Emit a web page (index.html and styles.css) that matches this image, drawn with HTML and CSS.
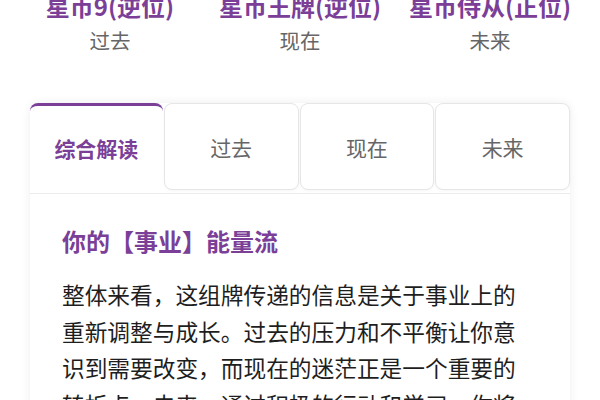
FILE: index.html
```html
<!DOCTYPE html>
<html lang="zh">
<head>
<meta charset="utf-8">
<link rel="stylesheet" href="styles.css">
</head>
<body>
<div class="cards">
  <div class="card-col"><div class="card-name">星币9(逆位)</div><div class="card-pos">过去</div></div>
  <div class="card-col"><div class="card-name">星币王牌(逆位)</div><div class="card-pos">现在</div></div>
  <div class="card-col"><div class="card-name">星币侍从(正位)</div><div class="card-pos">未来</div></div>
</div>
<div class="panel">
  <div class="tabs">
    <div class="tab active">综合解读</div>
    <div class="tab">过去</div>
    <div class="tab">现在</div>
    <div class="tab">未来</div>
  </div>
  <div class="content">
    <h2 class="heading">你的【事业】能量流</h2>
    <p class="text">整体来看，这组牌传递的信息是关于事业上的重新调整与成长。过去的压力和不平衡让你意识到需要改变，而现在的迷茫正是一个重要的转折点。未来，通过积极的行动和学习，你将迎来新的机会。</p>
  </div>
</div>
</body>
</html>
```
FILE: styles.css
```css
html, body {
  margin: 0;
  padding: 0;
  background: #ffffff;
  font-family: "Noto Sans CJK SC", "Noto Sans", sans-serif;
  overflow: hidden;
}
.cards {
  display: grid;
  grid-template-columns: repeat(3, 190px);
  width: 570px;
  margin: -10px auto 0;
}
.card-col {
  display: flex;
  flex-direction: column;
  align-items: center;
}
.card-name {
  font-size: 24px;
  font-weight: 700;
  line-height: 32px;
  color: #7b3f98;
  white-space: nowrap;
}
.card-pos {
  font-size: 20.5px;
  line-height: 28px;
  color: #666666;
  margin-top: 4px;
}
.panel {
  width: 540px;
  margin: 49px auto 0;
  background: #fff;
  border-radius: 8px 8px 0 0;
  box-shadow: 0 0 10px rgba(0, 0, 0, 0.07);
}
.tabs {
  display: flex;
  gap: 1px;
  border-bottom: 1px solid #ececec;
  height: 90px;
  align-items: flex-start;
}
.tab {
  flex: 1;
  height: 87px;
  box-sizing: border-box;
  border: 1px solid #e6e6e6;
  border-radius: 8px;
  background: #fff;
  display: flex;
  align-items: center;
  justify-content: center;
  font-size: 21px;
  color: #666666;
  box-shadow: 0 1px 3px rgba(0, 0, 0, 0.04);
}
.tab.active {
  height: 90px;
  border: none;
  border-top: 3px solid #7b3f98;
  border-radius: 8px 8px 0 0;
  color: #7b3f98;
  font-weight: 700;
  box-shadow: none;
  padding-bottom: 3px;
}
.content {
  padding: 31px 32px 0 32px;
}
.heading {
  margin: 0;
  font-size: 24px;
  font-weight: 700;
  line-height: 32px;
  color: #7b3f98;
}
.text {
  margin: 20px 0 0;
  font-size: 22.7px;
  line-height: 36.5px;
  color: #1e1e1e;
}
```
